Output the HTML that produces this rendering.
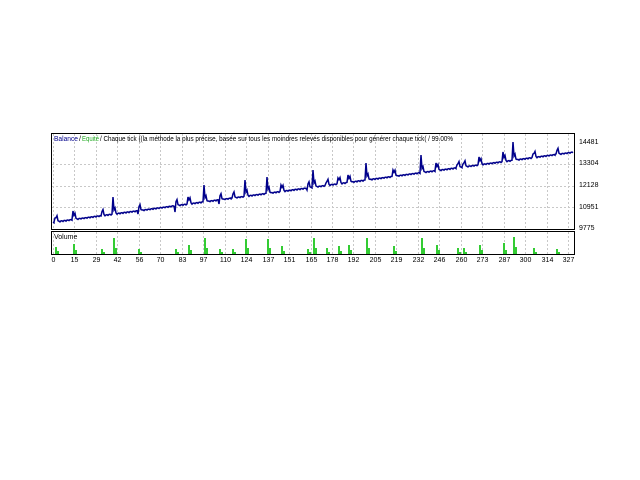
<!DOCTYPE html>
<html><head><meta charset="utf-8"><style>
html,body{margin:0;padding:0;background:#fff;width:640px;height:480px;overflow:hidden}
svg text{font-family:"Liberation Sans",sans-serif;font-size:7px}
</style></head><body>
<svg id="s" width="640" height="480" xmlns="http://www.w3.org/2000/svg">
<rect x="51.5" y="133.5" width="523" height="96" fill="#fff" stroke="#000" stroke-width="1"/>
<rect x="51.5" y="231.5" width="523" height="23" fill="#fff" stroke="#000" stroke-width="1"/>
<g id="grid" stroke="#c8c8c8" stroke-dasharray="2,2" stroke-width="1" shape-rendering="crispEdges"></g>
<text x="54" y="141" fill="#00008b" textLength="24" lengthAdjust="spacingAndGlyphs">Balance</text>
<text x="79" y="141" fill="#000">/</text>
<text x="82" y="141" fill="#2a2" textLength="17" lengthAdjust="spacingAndGlyphs">Equité</text>
<text x="100" y="141" fill="#000" textLength="353" lengthAdjust="spacingAndGlyphs">/ Chaque tick ((la méthode la plus précise, basée sur tous les moindres relevés disponibles pour générer chaque tick( / 99.00%</text>
<text x="54" y="239" fill="#000">Volume</text>
<g id="vol" fill="#33cc33"></g>
<path id="bal" fill="none" stroke="#00008b" stroke-width="1.5"/>
<g id="yl" fill="#000"></g>
<g id="xl" fill="#000" text-anchor="middle"></g>
</svg>
<script>
var ns="http://www.w3.org/2000/svg";
function el(p,t,a,txt){var e=document.createElementNS(ns,t);for(var k in a)e.setAttribute(k,a[k]);if(txt)e.textContent=txt;document.getElementById(p).appendChild(e);}
var labs=[0,15,29,42,56,70,83,97,110,124,137,151,165,178,192,205,219,232,246,260,273,287,300,314,327];
for(var i=0;i<labs.length;i++){var x=Math.round(53+i*21.46)+0.5;
 el("grid","line",{x1:x,y1:134,x2:x,y2:229});
 el("grid","line",{x1:x,y1:232,x2:x,y2:254});
 el("xl","text",{x:x,y:262},""+labs[i]);}
[164,186,207].forEach(function(g){el("grid","line",{x1:52,y1:g+.5,x2:574,y2:g+.5});});
[[144,"14481"],[165,"13304"],[187,"12128"],[209,"10951"],[230,"9775"]].forEach(function(g){el("yl","text",{x:579,y:g[0]},g[1]);});
function base(x){return 222-(x-53)*0.1346;}
var sp=[[55,218],[73,211],[101,216],[113,197],[138,214],[175,212],[188,197],[204,185],[219,204],[232,198],[245,180],[267,177],[281,185],[307,190],[313,170],[326,183],[338,178],[348,175],[366,163],[393,170],[421,155],[436,163],[457,165],[463,164],[479,157],[503,152],[513,142],[533,154],[556,154]];
var d="M53,"+base(53).toFixed(1);var j=0;
for(var x=54;x<=573;x++){
 var y=base(x)+(x%3==0?0.8:0);
 if(j<sp.length&&x>=sp[j][0]){var px=sp[j][0],py=sp[j][1];d+=" L"+(px-1)+","+base(px-1).toFixed(1)+" L"+px+","+py+" L"+(px+1)+","+(base(px)-4).toFixed(1)+" L"+(px+2)+","+(base(px)-6).toFixed(1)+" L"+(px+3)+","+(base(px)-1).toFixed(1);x=px+3;j++;
  var h=Math.round(Math.max(5,Math.min(21,(base(px)-py)*0.7+4)));
  el("vol","rect",{x:px,y:254-h,width:2,height:h});
  el("vol","rect",{x:px+2,y:254-Math.round(h*0.4),width:2,height:Math.round(h*0.4)});
  continue;}
 d+=" L"+x+","+y.toFixed(1);}
document.getElementById("bal").setAttribute("d",d);
</script>
</body></html>
